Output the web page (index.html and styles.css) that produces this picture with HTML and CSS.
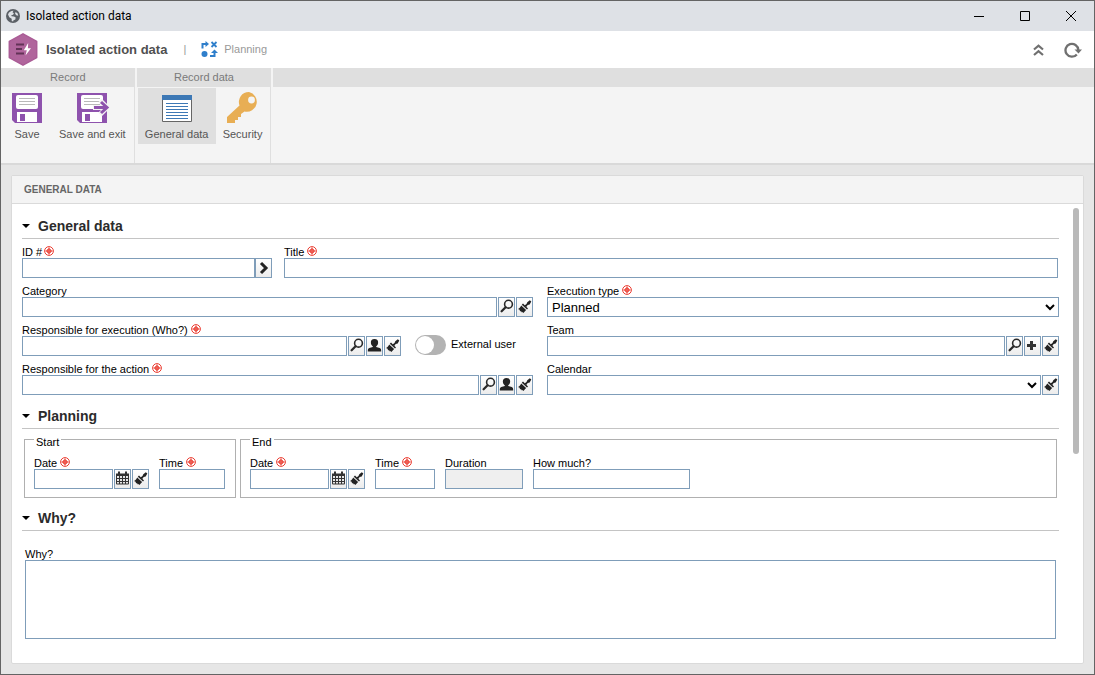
FILE: index.html
```html
<!DOCTYPE html>
<html lang="en">
<head>
<meta charset="utf-8">
<title>Isolated action data</title>
<link rel="stylesheet" href="styles.css">
</head>
<body>
<svg class="sprite" aria-hidden="true">
  <symbol id="required" viewBox="0 0 10 10">
    <circle cx="5" cy="5" r="4.400" fill="#fff" stroke="#e8281c" stroke-width=".9"/>
    <path d="M5 1.500v7M1.500 5h7" stroke="#e8281c" stroke-width="1"/>
    <circle cx="5" cy="5" r="2" fill="none" stroke="#e8281c" stroke-width=".9"/>
  </symbol>
  <symbol id="search" viewBox="0 0 15 18">
    <circle cx="9.500" cy="6.200" r="3.900" fill="none" stroke="#2a2a2a" stroke-width="1.600"/>
    <path d="M6.600 9.200L2.600 13.200" stroke="#2a2a2a" stroke-width="2.300" stroke-linecap="round"/>
  </symbol>
  <symbol id="person" viewBox="0 0 15 18">
    <path d="M7.500 2c2.600 0 3.900 1.600 3.600 3.900-.2 1.700-.9 2.700-1.900 3.300v.9l3.500.9c1.200.4 1.500 1.200 1.500 3.400H.8c0-2.200.3-3 1.500-3.400l3.500-.9v-.9c-1-.6-1.700-1.600-1.900-3.300C3.600 3.600 4.900 2 7.500 2z" fill="#222"/>
  </symbol>
  <symbol id="brush" viewBox="0 0 15 18">
    <path d="M10.300 4.200l2.500-2 1.500 1.300-1.600 3-2 .5-1.500 2-1.700-1.500 2-1.500z" fill="#222"/>
    <path d="M6 5.600l5 4.800-1 1.200-5.200-4.900z" fill="#222"/>
    <path d="M4.200 7.500l4.900 4.500-2.700 3-1-1-.5.500-1-1.400-.8.300-.5-1.700-1.600-.6c1.300-.7 2.300-1.600 3.200-3.600z" fill="#222"/>
  </symbol>
  <symbol id="calendar" viewBox="0 0 15 18">
    <path d="M1 3.500h13v10a1 1 0 0 1-1 1H2a1 1 0 0 1-1-1z" fill="#333"/>
    <path d="M4 1.500v3M11 1.500v3" stroke="#333" stroke-width="2"/>
    <path d="M2 6h2v2H2zM5 6h2v2H5zM8 6h2v2H8zM11 6h2v2h-2zM2 9h2v2H2zM5 9h2v2H5zM8 9h2v2H8zM11 9h2v2h-2zM2 12h2v1.500H2zM5 12h2v1.500H5zM8 12h2v1.500H8zM11 12h2v1.500h-2z" fill="#e6e6e6"/>
  </symbol>
  <symbol id="plus" viewBox="0 0 15 18">
    <path d="M6.500 4v9M2 8.500h9" stroke="#333" stroke-width="3"/>
  </symbol>
  <symbol id="next" viewBox="0 0 15 18">
    <path d="M5 4l5 5-5 5" fill="none" stroke="#222" stroke-width="3"/>
  </symbol>
  <symbol id="floppy" viewBox="0 0 30 30">
    <path d="M0 0h30v30H3l-3-3z" fill="#8e52ad"/>
    <rect x="4" y="2" width="22" height="14" rx="2" fill="#fff"/>
    <path d="M7 5.500h16M7 8.500h16M7 11.500h16" stroke="#b9b9b9"/>
    <path d="M5 19h20v10H5z" fill="#fff"/>
    <path d="M8 21h5v7H8z" fill="#8e52ad"/>
  </symbol>
</svg>

<div class="window">
  <div class="titlebar">
    <svg class="globe" viewBox="0 0 14 14"><circle cx="7" cy="7" r="7" fill="#5b6066"/><path d="M2 5.500c1-2.700 3-3.900 5.500-3.800L6.500 3.300l1.400 1-.8 1.500-1.900.4.500 1 2.300.2 1.700 1.100-.4 2-1.800.7-.4 1.200-1.400-.3V9.700L3.300 8.300zM9.500 3l2 1.300.8 2.400-2-.4-1.200-1.500z" fill="#dee1e6"/></svg>
    <span class="window-name">Isolated action data</span>
    <button class="win-btn" aria-label="Minimize"><svg viewBox="0 0 11 11"><path d="M0 5.500h10" stroke="#000"/></svg></button>
    <button class="win-btn" aria-label="Maximize"><svg viewBox="0 0 11 11"><path d="M.5.500h9v9h-9z" fill="none" stroke="#000"/></svg></button>
    <button class="win-btn" aria-label="Close"><svg viewBox="0 0 11 11"><path d="M0 0l10 10M10 0L0 10" stroke="#000"/></svg></button>
  </div>

  <header class="header">
    <svg class="logo" viewBox="0 0 30 33">
      <path d="M15 .8l13.700 7.600v16.200L15 32.200 1.300 24.600V8.400z" fill="#b0659c" stroke="#aa5c96" stroke-width="1.500" stroke-linejoin="round"/>
      <path d="M8 11.500h8M8 16h6M8 20.500h8" stroke="#623357" stroke-width="2"/>
      <path d="M20.200 10l-4.400 7.200h3l-1.300 5.300 5.500-7.300h-3.100z" fill="#fff"/>
    </svg>
    <h1 class="app-title">Isolated action data</h1>
    <span class="bar">|</span>
    <a class="crumb" href="#">
      <svg class="crumb-icon" viewBox="0 0 17 17" fill="none" stroke="#2f7fcb" stroke-width="2">
        <path d="M1.500 7.500V3H5"/><path d="M4.500 0l3.500 3-3.500 3z" fill="#2f7fcb" stroke="none"/>
        <path d="M10.500 1l5 5M15.500 1l-5 5" stroke-width="1.800"/>
        <circle cx="3.500" cy="13" r="3" fill="#2f7fcb" stroke="none"/>
        <path d="M9 15h4.500v-4"/><path d="M10 12l3.500-3.500L17 12z" fill="#2f7fcb" stroke="none"/>
      </svg>
      <span>Planning</span>
    </a>
    <div class="header-tools">
      <button class="tool" aria-label="Collapse"><svg width="11" height="12" viewBox="0 0 11 12"><path d="M1 5.500L5.500 1.700 10 5.500M1 11l4.500-3.800L10 11" fill="none" stroke="#707070" stroke-width="2.200"/></svg></button>
      <button class="tool" aria-label="Refresh"><svg width="18" height="16" viewBox="0 0 18 16"><path d="M12.800 12.400A6.400 6.400 0 1 1 14.300 8" fill="none" stroke="#707070" stroke-width="2.300"/><path d="M10.500 7.500H18L14.500 11.500z" fill="#707070"/></svg></button>
    </div>
  </header>

  <nav class="ribbon">
    <section class="group">
      <h2 class="group-title">Record</h2>
      <div class="group-body">
        <button class="action"><svg class="action-icon" viewBox="-1 -1 32 32"><use href="#floppy" width="30" height="30"/></svg>Save</button>
        <button class="action"><svg class="action-icon" viewBox="-1 -1 32 32"><use href="#floppy" width="30" height="30"/><path d="M16 14.500h13M23 7.500l7 7-7 7" fill="none" stroke="#f4f4f4" stroke-width="5"/><path d="M17 14.500h13M24 9l6 5.500-6 5.500" fill="none" stroke="#8e52ad" stroke-width="3"/></svg>Save and exit</button>
      </div>
    </section>
    <section class="group">
      <h2 class="group-title">Record data</h2>
      <div class="group-body">
        <button class="action active"><svg class="action-icon" viewBox="0 0 32 32"><path d="M1.500 3.500h29v26h-29z" fill="#fff" stroke="#666"/><path d="M1 3h30v5H1z" fill="#3d78b5"/><path d="M5 11.500h22M5 14.500h22M5 17.500h22M5 20.500h22M5 23.500h22M5 26.500h22" stroke="#3d78b5"/></svg>General data</button>
        <button class="action"><svg class="action-icon" viewBox="0 0 32 32"><path d="M22 0a10 10 0 1 1-4.500 19.500L14 22v3h-3v3H8v3H0v-6l12.500-11.500A10 10 0 0 1 22 0z" fill="#e8ae54"/><circle cx="24.500" cy="8" r="3.400" fill="#f4f4f4"/></svg>Security</button>
      </div>
    </section>
    <div class="group-rest"></div>
  </nav>

  <main class="workspace">
    <div class="panel">
      <h2 class="panel-title">GENERAL DATA</h2>
      <div class="panel-body">
        <form class="form">
          <h3 class="section-title first"><svg class="caret" viewBox="0 0 8 4"><path d="M0 0h8L4 4z"/></svg>General data</h3>
          <div class="rows">
            <div class="line">
              <div class="field id-field">
                <label for="id">ID # <svg class="req"><use href="#required"/></svg></label>
                <div class="control joined"><input id="id" type="text"><button type="button" class="mini" aria-label="Next ID"><svg><use href="#next"/></svg></button></div>
              </div>
              <div class="field grow">
                <label for="title">Title <svg class="req"><use href="#required"/></svg></label>
                <div class="control"><input id="title" type="text"></div>
              </div>
            </div>
            <div class="columns">
              <div class="field">
                <label for="category">Category</label>
                <div class="control"><input id="category" type="text"><button type="button" class="mini" aria-label="Search"><svg><use href="#search"/></svg></button><button type="button" class="mini" aria-label="Clear"><svg><use href="#brush"/></svg></button></div>
              </div>
              <div class="field">
                <label for="exec">Execution type <svg class="req"><use href="#required"/></svg></label>
                <div class="control"><select id="exec"><option>Planned</option></select></div>
              </div>
              <div class="pair">
                <div class="field grow">
                  <label for="who">Responsible for execution (Who?) <svg class="req"><use href="#required"/></svg></label>
                  <div class="control"><input id="who" type="text"><button type="button" class="mini" aria-label="Search"><svg><use href="#search"/></svg></button><button type="button" class="mini" aria-label="Me"><svg><use href="#person"/></svg></button><button type="button" class="mini" aria-label="Clear"><svg><use href="#brush"/></svg></button></div>
                </div>
                <label class="switch"><input type="checkbox" class="toggle"><span>External user</span></label>
              </div>
              <div class="field">
                <label for="team">Team</label>
                <div class="control"><input id="team" type="text"><button type="button" class="mini" aria-label="Search"><svg><use href="#search"/></svg></button><button type="button" class="mini" aria-label="Add"><svg><use href="#plus"/></svg></button><button type="button" class="mini" aria-label="Clear"><svg><use href="#brush"/></svg></button></div>
              </div>
              <div class="field">
                <label for="resp">Responsible for the action <svg class="req"><use href="#required"/></svg></label>
                <div class="control"><input id="resp" type="text"><button type="button" class="mini" aria-label="Search"><svg><use href="#search"/></svg></button><button type="button" class="mini" aria-label="Me"><svg><use href="#person"/></svg></button><button type="button" class="mini" aria-label="Clear"><svg><use href="#brush"/></svg></button></div>
              </div>
              <div class="field">
                <label for="cal">Calendar</label>
                <div class="control"><select id="cal"><option></option></select><button type="button" class="mini" aria-label="Clear"><svg><use href="#brush"/></svg></button></div>
              </div>
            </div>
          </div>

          <h3 class="section-title"><svg class="caret" viewBox="0 0 8 4"><path d="M0 0h8L4 4z"/></svg>Planning</h3>
          <div class="periods">
            <fieldset class="period">
              <legend>Start</legend>
              <div class="period-fields">
                <div class="field">
                  <label for="sdate">Date <svg class="req"><use href="#required"/></svg></label>
                  <div class="control"><input id="sdate" class="w-date" type="text"><button type="button" class="mini" aria-label="Pick date"><svg><use href="#calendar"/></svg></button><button type="button" class="mini" aria-label="Clear"><svg><use href="#brush"/></svg></button></div>
                </div>
                <div class="field">
                  <label for="stime">Time <svg class="req"><use href="#required"/></svg></label>
                  <div class="control"><input id="stime" class="w-start-time" type="text"></div>
                </div>
              </div>
            </fieldset>
            <fieldset class="period grow">
              <legend>End</legend>
              <div class="period-fields">
                <div class="field">
                  <label for="edate">Date <svg class="req"><use href="#required"/></svg></label>
                  <div class="control"><input id="edate" class="w-date" type="text"><button type="button" class="mini" aria-label="Pick date"><svg><use href="#calendar"/></svg></button><button type="button" class="mini" aria-label="Clear"><svg><use href="#brush"/></svg></button></div>
                </div>
                <div class="field">
                  <label for="etime">Time <svg class="req"><use href="#required"/></svg></label>
                  <div class="control"><input id="etime" class="w-end-time" type="text"></div>
                </div>
                <div class="field">
                  <label for="duration">Duration</label>
                  <div class="control"><input id="duration" class="w-duration" type="text" disabled></div>
                </div>
                <div class="field">
                  <label for="cost">How much?</label>
                  <div class="control"><input id="cost" class="w-cost" type="text"></div>
                </div>
              </div>
            </fieldset>
          </div>

          <h3 class="section-title last"><svg class="caret" viewBox="0 0 8 4"><path d="M0 0h8L4 4z"/></svg>Why?</h3>
          <div class="field why">
            <label for="why">Why?</label>
            <textarea id="why"></textarea>
          </div>
        </form>
        <div class="scroll"><div class="thumb"></div></div>
      </div>
    </div>
  </main>
</div>
</body>
</html>
```
FILE: styles.css
```css
* { box-sizing: border-box; }

body {
  margin: 0;
  font: 11px/13px "Liberation Sans", Arial, sans-serif;
  color: #111;
}

h1, h2, h3 { margin: 0; }
button { font: inherit; color: inherit; border: 0; background: none; padding: 0; }
svg { display: block; }
.sprite { display: none; }
.grow { flex: 1; }

.window {
  min-height: 100vh;
  display: flex;
  flex-direction: column;
  border: 1px solid #646464;
  background: #e6e6e6;
}

/* Title bar */
.titlebar {
  display: flex;
  align-items: center;
  height: 30px;
  padding-left: 5px;
  background: #dee1e6;
}
.globe { width: 14px; height: 14px; }
.window-name {
  flex: 1;
  margin-left: 6px;
  font: 12px/16px Roboto, sans-serif;
  color: #000;
}
.win-btn { width: 46px; height: 30px; display: grid; place-items: center; }
.win-btn svg { width: 11px; height: 11px; }

/* Header */
.header {
  display: flex;
  align-items: center;
  height: 37px;
  padding: 0 12px 0 7px;
  background: #fff;
}
.logo { width: 30px; height: 33px; }
.app-title { margin-left: 8px; font-size: 13px; line-height: 16px; color: #505050; }
.bar { margin-left: 16px; color: #999; }
.crumb {
  display: flex;
  align-items: center;
  gap: 6px;
  margin-left: 15px;
  color: #999;
  text-decoration: none;
}
.crumb-icon { width: 17px; height: 17px; }
.header-tools { display: flex; align-items: center; gap: 20px; margin-left: auto; }

/* Ribbon */
.ribbon {
  display: flex;
  gap: 2px;
  height: 97px;
  background: #f4f4f4;
  border-bottom: 2px solid #d9d9d9;
}
.group { display: flex; flex-direction: column; }
.group-title {
  height: 19px;
  background: #dfdfdf;
  font-size: 11px;
  line-height: 19px;
  font-weight: normal;
  text-align: center;
  color: #7a7a7a;
}
.group-body {
  flex: 1;
  display: flex;
  align-items: flex-start;
  padding: 1px 1px 0;
  border-right: 1px solid #dfdfdf;
}
.group-rest { flex: 1; height: 19px; background: #dfdfdf; }
.action {
  display: flex;
  flex-direction: column;
  align-items: center;
  gap: 4px;
  min-width: 50px;
  height: 56px;
  padding: 4px 7px 0;
  color: #555;
}
.action.active { min-width: 78px; background: #dfdfdf; }
.action-icon { width: 32px; height: 32px; overflow: visible; }

/* Panel */
.workspace { flex: 1; display: flex; padding: 10px; }
.panel {
  flex: 1;
  display: flex;
  flex-direction: column;
  border: 1px solid #dadada;
  border-radius: 2px;
  background: #fff;
}
.panel-title {
  padding: 1px 12px 0;
  border-bottom: 1px solid #dadada;
  background: #f4f4f4;
  font-size: 10px;
  line-height: 26px;
  color: #666;
}
.panel-body { flex: 1; display: flex; padding: 0 4px 0 10px; }
.form { flex: 1; min-width: 0; }
.scroll { width: 6px; margin: 4px 0 0 14px; }
.thumb { height: 54%; border-radius: 3px; background: #b9b9b9; }

.section-title {
  display: flex;
  align-items: center;
  gap: 8px;
  height: 24px;
  margin-top: 10px;
  padding-bottom: 2px;
  border-bottom: 1px solid #c4c4c4;
  font-size: 14px;
  line-height: 20px;
  color: #2b2b2b;
}
.section-title.first { margin-top: 11px; }
.section-title.last { margin-top: 9px; }
.caret { width: 8px; height: 4px; fill: #000; }

/* Fields */
.rows { display: flex; flex-direction: column; gap: 6px; padding-top: 6px; }
.line { display: flex; gap: 12px; padding-right: 1px; }
.id-field { width: 250px; }
.columns { display: grid; grid-template-columns: 511fr 512fr; gap: 6px 14px; }
.pair { display: flex; gap: 14px; }
.field { min-width: 0; }
.field label { display: flex; align-items: flex-start; gap: 3px; height: 13px; line-height: 15px; white-space: nowrap; color: #000; }
.req { width: 10px; height: 10px; margin-top: 1px; }
.id-field label { gap: 2px; }
.control { display: flex; gap: 1px; height: 20px; }
.joined { gap: 0; }
.control input, .control select {
  flex: 1;
  min-width: 0;
  height: 20px;
  margin: 0;
  padding: 0 4px;
  border: 1px solid #7f9db9;
  border-radius: 0;
  background: #fff;
  font: 13px "Liberation Sans", Arial, sans-serif;
  color: #000;
}
.control select { padding: 0; }
.control input:disabled { background: #efefef; }
.mini {
  width: 17px;
  height: 20px;
  border: 1px solid #7f9db9;
  background: linear-gradient(#fff, #ececec);
}
.mini svg { width: 15px; height: 18px; }

.switch { display: flex; align-items: center; gap: 5px; width: 118px; padding-top: 10px; color: #000; white-space: nowrap; }
.toggle {
  appearance: none;
  display: flex;
  align-items: center;
  width: 31px;
  height: 20px;
  margin: 0;
  padding: 0 1px;
  border-radius: 10px;
  background: #b3b3b3;
}
.toggle::before { content: ""; width: 18px; height: 18px; border-radius: 50%; background: #fff; }
.toggle:checked { justify-content: flex-end; }

/* Planning */
.periods { display: flex; gap: 4px; padding: 1px 2px 0; }
.period { min-width: 0; margin: 0; padding: 7px 10px 8px 9px; border: 1px solid #b0b0b0; }
.period legend { padding: 6px 2px 0; color: #000; }
.period-fields { display: flex; gap: 10px; }
.control .w-date { flex: none; width: 79px; }
.control .w-start-time { flex: none; width: 66px; }
.control .w-end-time { flex: none; width: 60px; }
.control .w-duration { flex: none; width: 78px; }
.control .w-cost { flex: none; width: 157px; }

.why { padding: 16px 3px 0; }
.why textarea {
  display: block;
  width: 100%;
  height: 79px;
  border: 1px solid #7f9db9;
  border-radius: 0;
  background: #fff;
  resize: none;
  font: inherit;
}
```
